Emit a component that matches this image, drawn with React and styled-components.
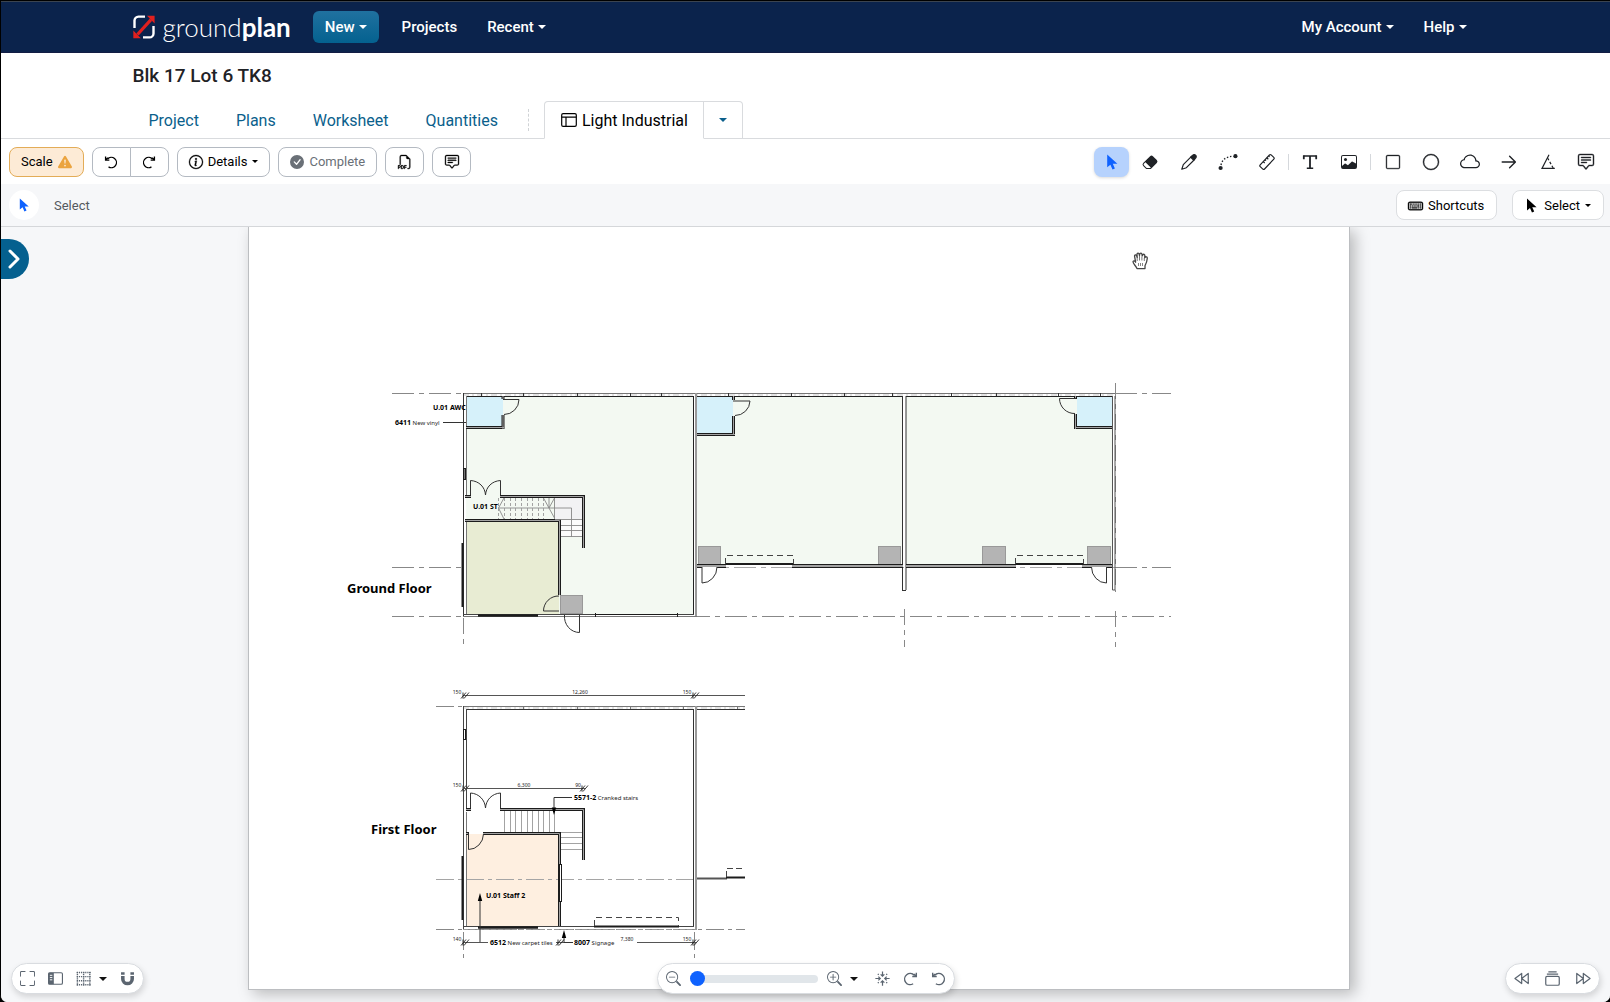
import React, { useState } from "react";
import styled, { createGlobalStyle, css } from "styled-components";
import {
  BsChatSquareText,
  BsCheckCircleFill,
  BsCircle,
  BsCloud,
  BsEraserFill,
  BsExclamationTriangleFill,
  BsFiletypePdf,
  BsFullscreen,
  BsImage,
  BsInfoCircle,
  BsKeyboard,
  BsSquare,
  BsZoomIn,
  BsZoomOut,
} from "react-icons/bs";

/* ---------- icons ---------- */

const PointerIcon = () => (
  <svg className="icon" viewBox="0 0 16 16" fill="currentColor" aria-hidden="true">
    <path d="M3.2.6v12.6l3.2-2.5 2.1 4.7 2.4-1-2.1-4.6h4.6z" />
  </svg>
);

const UndoIcon = () => (
  <svg className="icon" viewBox="0 0 16 16" fill="none" stroke="currentColor" strokeWidth="1.5" aria-hidden="true">
    <path d="M4 4.6A5.9 5.9 0 1 1 5.2 13.6" />
    <path d="M1.8 1.8v4h4.3M1.8 5.8l2.6-2.6" />
  </svg>
);

const RedoIcon = () => (
  <svg className="icon" viewBox="0 0 16 16" fill="none" stroke="currentColor" strokeWidth="1.5" aria-hidden="true">
    <path d="M12 4.6A5.9 5.9 0 1 0 10.8 13.6" />
    <path d="M14.2 1.8v4H9.9M14.2 5.8l-2.6-2.6" />
  </svg>
);

const LayoutIcon = () => (
  <svg className="icon" viewBox="0 0 16 16" fill="none" stroke="currentColor" strokeWidth="1.2" aria-hidden="true">
    <rect x="0.7" y="1.6" width="14.6" height="12.8" rx="1.4" />
    <path d="M.7 5.2h14.6M5 5.2v9.2" />
  </svg>
);

const PencilIcon = () => (
  <svg className="icon" viewBox="0 0 16 16" fill="none" stroke="currentColor" strokeWidth="1.2" aria-hidden="true">
    <path d="M.8 15.2l1.5-4.6 8.2-8.2 3.1 3.1-8.2 8.2z" strokeLinejoin="round" />
    <path d="M9.7 3.2l2-2a2 2 0 0 1 2.9 0 2 2 0 0 1 0 2.9l-2 2z" fill="currentColor" />
  </svg>
);

const PathIcon = () => (
  <svg className="icon" viewBox="0 0 20 18" fill="currentColor" aria-hidden="true">
    <circle cx="2.6" cy="15" r="2.1" />
    <circle cx="17.4" cy="3.2" r="2.1" />
    <path
      d="M3 12C4.2 6.6 8 3.6 15 3.3"
      fill="none"
      stroke="currentColor"
      strokeWidth="1.4"
      strokeDasharray="1.4 1.9"
    />
  </svg>
);

const RulerIcon = () => (
  <svg className="icon" viewBox="0 0 16 16" fill="none" stroke="currentColor" strokeWidth="1.2" aria-hidden="true">
    <rect x="-8" y="-3" width="16" height="6" rx="1.2" transform="translate(8 8) rotate(-47)" />
    <path d="M4.2 7.6l1.5 1.4M6 5.7l1 .9M7.8 3.8l1.5 1.4M9.7 2.1l.9.8" />
  </svg>
);

const TypeIcon = () => (
  <svg className="icon" viewBox="0 0 16 16" fill="none" stroke="currentColor" aria-hidden="true">
    <path d="M1.2 2h13.6M4.8 14.3h6.4" strokeWidth="1.6" />
    <path d="M8 2v12M1.8 1.4v3.8M14.2 1.4v3.8" strokeWidth="1.8" />
  </svg>
);

const ArrowIcon = () => (
  <svg className="icon" viewBox="0 0 16 16" fill="none" stroke="currentColor" strokeWidth="1.4" aria-hidden="true">
    <path d="M1.2 8h13M8.6 2.2L14.4 8l-5.8 5.8" strokeLinecap="round" strokeLinejoin="round" />
  </svg>
);

const AngleIcon = () => (
  <svg className="icon" viewBox="0 0 16 16" fill="none" stroke="currentColor" strokeWidth="1.2" aria-hidden="true">
    <path d="M9 .8L2 14.4h12.8" />
    <path d="M7.6 4l5.6 10" strokeDasharray="2.6 1.8" />
  </svg>
);

const SidePanelIcon = () => (
  <svg className="icon" viewBox="0 0 16 16" aria-hidden="true">
    <rect x=".6" y="1.9" width="14.8" height="12.2" rx="1.4" fill="none" stroke="currentColor" strokeWidth="1.2" />
    <rect x=".6" y="1.9" width="5.6" height="12.2" fill="currentColor" />
    <path d="M2 4.6h2.6M2 7h2.6M2 9.4h2.6" stroke="#fff" strokeWidth="1" />
  </svg>
);

const GridIcon = () => (
  <svg
    className="icon"
    viewBox="0 0 15 15"
    fill="none"
    stroke="currentColor"
    strokeWidth="1.4"
    strokeDasharray="1.2 .9"
    aria-hidden="true"
  >
    <path d="M.8 1.5h13.8M.8 5.600h13.8M.8 9.700h13.8M.8 13.800h13.8" />
    <path d="M1.400 1v13.500M7.600 1v13.500M13.800 1v13.500" />
  </svg>
);

const MagnetIcon = () => (
  <svg className="icon" viewBox="0 0 16 16" fill="none" stroke="currentColor" strokeWidth="3.8" aria-hidden="true">
    <path d="M3 5.4v3a5 5 0 0 0 10 0v-3M3 1.4v2.6M13 1.4v2.6" />
  </svg>
);

const CollapseIcon = () => (
  <svg className="icon" viewBox="0 0 16 16" fill="none" stroke="currentColor" strokeWidth="1.3" aria-hidden="true">
    <path d="M8 .4v5M6 3.6l2 2 2-2M8 15.6v-5M6 12.4l2-2 2 2M.4 8h5M3.6 6l2 2-2 2M15.6 8h-5M12.4 6l-2 2 2 2" />
    <path d="M3 3l1 1M13 3l-1 1M3 13l1-1M13 13l-1-1" />
  </svg>
);

const RewindIcon = () => (
  <svg className="icon" viewBox="0 0 16 16" fill="none" stroke="currentColor" strokeWidth="1.3" aria-hidden="true">
    <path d="M8.2 2.6v10.8L1 8zM15.2 2.6v10.8L8.2 8z" strokeLinejoin="round" />
  </svg>
);

const ForwardIcon = () => (
  <svg className="icon" viewBox="0 0 16 16" fill="none" stroke="currentColor" strokeWidth="1.3" aria-hidden="true">
    <path d="M7.8 2.6v10.8L15 8zM.8 2.6v10.8L7.8 8z" strokeLinejoin="round" />
  </svg>
);

const StackIcon = () => (
  <svg className="icon" viewBox="0 0 16 16" fill="none" stroke="currentColor" strokeWidth="1.3" aria-hidden="true">
    <rect x=".8" y="5.8" width="14.4" height="9.4" rx="1.4" />
    <path d="M2 3.4h12M3.6 1h8.8" />
  </svg>
);

const LogoMark = () => (
  <svg viewBox="0 0 22 24" width="22" height="24" fill="none" aria-hidden="true">
    <path d="M1.5 13V5.6a4 4 0 0 1 4-4H12" stroke="#fff" strokeWidth="2.4" />
    <path d="M20.5 11v7.4a4 4 0 0 1-4 4H10" stroke="#fff" strokeWidth="2.4" />
    <path d="M4.5 19.5L18 4.6" stroke="#e0201f" strokeWidth="3.2" />
    <path d="M14 .8h7.6v7.6zM.3 15.6v7.6h7.6z" fill="#e0201f" />
  </svg>
);

const HandIcon = () => (
  <svg viewBox="0 0 17 18" width="17" height="18" aria-hidden="true">
    <path
      d="M5 16.5C4 14 1 11.6 1 9.8c0-1.2 1.7-1.2 2.6.4L2.6 4.4c-.3-1.7 1.7-2 2.1-.4l.5 1.4-.2-3c0-1.6 1.9-1.8 2.2-.1l.3 1.2.2-1.3c.3-1.5 2.1-1.4 2.3.1l.2 1.5.6-1c.8-1 2.1-.5 2 .8l-.1 2.2c.8-1.7 2.7-1.2 2.6.4-.2 3.2-1.3 5.6-2.3 7.6v2.8z"
      fill="#fff"
      stroke="#444"
      strokeWidth="1.3"
      strokeLinejoin="round"
    />
    <path d="M5.2 5v4M7.5 4v4.5M9.9 4.5v4M12.3 6v3" stroke="#555" strokeWidth=".8" />
    <path d="M6.5 11v3M8.5 11v3M10.5 11v3" stroke="#666" strokeWidth=".8" />
  </svg>
);

/* ---------- plan drawing ---------- */

const BigLabel = ({ x, y, children }) => (
  <text x={x} y={y} fontSize="13" fontWeight="700">
    {children}
  </text>
);

const Note = ({ x, y, code, children }) => (
  <text x={x} y={y} fontSize="7">
    <tspan fontWeight="700">{code}</tspan>
    {children && (
      <tspan fill="#222" fontSize="6">
        {" "}
        {children}
      </tspan>
    )}
  </text>
);

const Dim = ({ x, y, children }) => (
  <text x={x} y={y} fontSize="5" fill="#222" textAnchor="middle">
    {children}
  </text>
);

const Tick = ({ x, y }) => (
  <path d={`M${x - 2} ${y + 3}l5-6M${x + 1} ${y + 3}l5-6M${x} ${y - 3}v6`} stroke="#222" strokeWidth=".9" />
);

// double line wall with a grey core
const Wall = ({ d, core = "#a3a3a3", w = 3 }) => (
  <>
    <path d={d} stroke="#1c1c1c" strokeWidth={w} />
    <path d={d} stroke={core} strokeWidth={w - 2} />
  </>
);

function GroundFloor() {
  return (
    <g fill="none">
      <rect x="466" y="396" width="228" height="218" fill="#f3f9f2" />
      <rect x="697" y="396" width="206" height="169" fill="#f3f9f2" />
      <rect x="906" y="396" width="207" height="169" fill="#f3f9f2" />
      <rect x="466" y="397" width="37" height="30" fill="#d6f1fa" />
      <rect x="697" y="397" width="36" height="36" fill="#d6f1fa" />
      <rect x="1077" y="397" width="36" height="30" fill="#d6f1fa" />
      <rect x="466" y="521" width="93" height="93" fill="#e8ecd3" />
      <rect x="555" y="498" width="27" height="21" fill="#f2f2f4" />
      <rect x="561" y="519" width="21" height="18" fill="#fbfbfb" />

      <g stroke="#888" strokeWidth="1" strokeDasharray="22 5 5 5">
        <path d="M392 393.5H463M392 567.5H463M392 616.5H1171M1115 393.5H1171M1115 567.5H1171" />
        <path d="M697 567.5H1115" stroke="#aaa" />
      </g>
      <g stroke="#888" strokeWidth="1" strokeDasharray="16 5 5 5">
        <path d="M463.5 618V647M904.5 609V647M1115.5 383V592M1115.5 611V647" />
      </g>

      <path d="M463 393.5H1115" stroke="#777" />
      <path d="M463 395H1115" stroke="#bbb" strokeDasharray="6 3 2 3" strokeWidth=".8" />
      <path d="M466 396.5H693M697 396.5H903M906 396.5H1112" stroke="#222" />
      <path
        d="M481.5 393v3M523.5 393v3M577.5 393v3M630.5 393v3M661.5 393v3M728.5 393v3M791.5 393v3M844.5 393v3M892.5 393v3M951.5 393v3M996.5 393v3M1058.5 393v3M1100.5 393v3"
        stroke="#333"
      />
      <path d="M463.5 393V616" stroke="#333" />
      <path d="M466.5 396V497" stroke="#777" />
      <path d="M466.5 521V614" stroke="#777" />
      <path d="M693.5 396V614" stroke="#222" />
      <path d="M696 393V616" stroke="#999" strokeWidth="2" />
      <path d="M902.5 396V590M906 590V396M902 590.5H906" stroke="#333" />
      <path d="M1112.5 396V590H1115V396" stroke="#555" />
      <path d="M463 614.5H694" stroke="#444" />
      <path d="M463 616.5H697" stroke="#777" />
      <path d="M462.5 543V607" stroke="#1c1c1c" strokeWidth="2" />
      <rect x="463.5" y="468.5" width="2" height="11" stroke="#1c1c1c" fill="#777" />

      <Wall d="M466 427.5H504M503 415V429M503 396v3" />
      <path d="M503 399.5H519A15 15 0 0 1 504 414.5" stroke="#333" />
      <Wall d="M697 434.5H735M733.5 416V435M733.5 396v4" />
      <path d="M733 401H750A15 15 0 0 1 735 415.5" stroke="#333" />
      <Wall d="M1075 427.5H1112M1075.5 414V429M1075.5 396v3" />
      <path d="M1076 398.5H1059.5A15 15 0 0 0 1075 413.5" stroke="#333" />

      <path d="M470.5 497V480.5C479 481 485 487 485.5 495C486 487 492 481 500.5 480.5V497" stroke="#333" />
      <Wall d="M465 496.5H471M500 496.5H583.5V548" />
      <Wall d="M465 520.5H559.5V595" />
      <path
        d="M498.5 508H571.5V537M498.5 508L504 498M498.5 508L504 519M543.5 498L554.5 518M549 498V508L554.5 498M554.5 498V519M555 519.5H582M561 525.5H582M561 530.5H582M561 536.5H582"
        stroke="#888"
        strokeWidth=".9"
      />
      <path
        d="M498.5 498V519M504.5 498V519M510.5 498V519M515.5 498V519M521.5 498V519M527.5 498V519M532.5 498V519M538.5 498V519M543.5 498V519"
        stroke="#999"
        strokeDasharray="3 2"
        strokeWidth=".9"
      />

      <g fill="#b4b4b4" stroke="#999">
        <rect x="560.5" y="595.5" width="22" height="18" />
        <rect x="698.5" y="546.5" width="22" height="18" />
        <rect x="878.5" y="546.5" width="22" height="18" />
        <rect x="982.5" y="546.5" width="23" height="18" />
        <rect x="1087.5" y="546.5" width="23" height="18" />
      </g>
      <path d="M559 611H543.5A15 15 0 0 1 559 596" stroke="#333" />
      <path d="M579.5 615V632.5A15 16 0 0 1 564.5 615" stroke="#333" />
      <path d="M478 615.5H538" stroke="#1c1c1c" strokeWidth="2.5" />
      <path d="M595 614.5H678M595.5 613v4M677.5 613v4" stroke="#1c1c1c" />

      <Wall d="M697 566H726M792 566H903M906 566H1016M1082 566H1112" w={4} />
      <path d="M726 564H793M1016 564H1083" stroke="#1c1c1c" strokeWidth="2" />
      <path d="M702 567V583A15 16 0 0 0 717 567M1106.5 567V583A15 16 0 0 1 1091.5 567" stroke="#333" fill="#fff" />
      <path d="M725.5 564V555.5H793.5V564M1015.5 564V555.5H1083.5V564" stroke="#444" strokeDasharray="6 4" />

      <path d="M443 422.5H466" stroke="#333" />
    </g>
  );
}

function FirstFloor() {
  return (
    <g fill="none">
      <rect x="466" y="834" width="93" height="92" fill="#feefe0" />
      <g stroke="#888" strokeWidth="1" strokeDasharray="18 4 4 4">
        <path d="M436 706.5H463M436 929.5H745M463.5 932V959M694.5 932V959" />
        <path d="M436 879.5H693" stroke="#a5a5a5" />
      </g>
      <path d="M463 695.5H745M463 788.5H585M463 942.5H488M556 942.5H573M637 942.5H696" stroke="#555" />
      <Tick x={463} y={695.5} />
      <Tick x={693} y={695.5} />
      <Tick x={463} y={788.5} />
      <Tick x={582} y={788.5} />
      <Tick x={463} y={942.5} />
      <Tick x={558} y={942.5} />
      <Tick x={693} y={942.5} />

      <path d="M463 706.5H745" stroke="#777" />
      <path d="M463 708H745" stroke="#bbb" strokeDasharray="6 3 2 3" strokeWidth=".8" />
      <path d="M466 709.5H693M697 709.5H745" stroke="#333" />
      <path d="M523.5 706v3M577.5 706v3M630.5 706v3M683.5 706v3M737.5 706v3" stroke="#777" />
      <path d="M463.5 706V929M466.5 709V808" stroke="#444" />
      <path d="M466.5 812V926" stroke="#777" />
      <path d="M693.5 709V926" stroke="#333" />
      <path d="M696 706V929" stroke="#999" strokeWidth="2" />
      <path d="M463 926.5H694" stroke="#444" />
      <path d="M463 929.5H697" stroke="#999" strokeDasharray="5 2" />
      <path d="M462.5 856V920" stroke="#1c1c1c" strokeWidth="2" />
      <rect x="463.5" y="729.5" width="2" height="10" stroke="#1c1c1c" fill="#fff" />

      <path d="M470.5 809V793C479 793.5 485 800 485.5 808C486 800 492 793.5 500.5 793V809" stroke="#333" />
      <Wall d="M466 809.5H471M500 809.5H583.5V860" />
      <Wall d="M483 833.5H559.5V926M466 833.5H469" />
      <rect x="559.5" y="864.5" width="2" height="37" fill="#fff" stroke="#1c1c1c" />
      <path
        d="M504.5 811V832M510.5 811V832M515.5 811V832M521.5 811V832M527.5 811V832M532.5 811V832M538.5 811V832M543.5 811V832M549.5 811V832M554.5 811V832M561 832.5H582M561 837.5H582M561 843.5H582M561 849.5H582"
        stroke="#999"
        strokeWidth=".9"
      />
      <path d="M468.5 833V849.5A15 16 0 0 0 483.5 834" stroke="#333" />

      <path d="M478 927.5H538" stroke="#1c1c1c" strokeWidth="2.5" />
      <path d="M594 926.5H679" stroke="#1c1c1c" strokeWidth="2" />
      <path d="M594.5 926V917.5H678.5V926" stroke="#444" strokeDasharray="6 4" />
      <path d="M697 878.5H727" stroke="#555" strokeWidth="2" />
      <path d="M726 877.5H745" stroke="#1c1c1c" strokeWidth="2" />
      <path d="M726.5 877V868.5H742" stroke="#444" strokeDasharray="6 3" />

      <path d="M572 797.5H554V808M480 942V899M573 942.5H564V938" stroke="#333" />
      <path d="M551.8 807.5h4.4l-2.2 7.5zM477.8 901h4.4l-2.2-8zM561.8 938h4.4l-2.2-8z" fill="#000" />
    </g>
  );
}

function Plan() {
  return (
    <PlanSvg viewBox="249 227 1100 762" role="img" aria-label="Ground and first floor plan">
      <GroundFloor />
      <FirstFloor />
      <g fill="#000">
        <BigLabel x={347} y={593}>Ground Floor</BigLabel>
        <BigLabel x={371} y={834}>First Floor</BigLabel>
        <Note x={433} y={410} code="U.01 AWC" />
        <Note x={395} y={425} code="6411">New vinyl</Note>
        <Note x={473} y={509} code="U.01 ST" />
        <Note x={574} y={800} code="5571-2">Cranked stairs</Note>
        <Note x={486} y={898} code="U.01 Staff 2" />
        <Note x={490} y={945} code="6512">New carpet tiles</Note>
        <Note x={574} y={945} code="8007">Signage</Note>
        <Dim x={457} y={694}>150</Dim>
        <Dim x={580} y={694}>12,260</Dim>
        <Dim x={687} y={694}>150</Dim>
        <Dim x={457} y={787}>150</Dim>
        <Dim x={524} y={787}>6,300</Dim>
        <Dim x={578} y={787}>90</Dim>
        <Dim x={457} y={941}>140</Dim>
        <Dim x={627} y={941}>7,380</Dim>
        <Dim x={687} y={941}>150</Dim>
      </g>
    </PlanSvg>
  );
}

/* ---------- page ---------- */

const TABS = ["Project", "Plans", "Worksheet", "Quantities"];

const TOOLS = [
  { name: "Select", icon: <PointerIcon /> },
  { name: "Eraser", icon: <BsEraserFill className="icon" /> },
  { name: "Pencil", icon: <PencilIcon /> },
  { name: "Path", icon: <PathIcon />, wide: true },
  { name: "Measure", icon: <RulerIcon /> },
  null,
  { name: "Text", icon: <TypeIcon /> },
  { name: "Image", icon: <BsImage className="icon" /> },
  null,
  { name: "Rectangle", icon: <BsSquare className="icon heavy" />, small: true },
  { name: "Ellipse", icon: <BsCircle className="icon heavy" /> },
  { name: "Cloud", icon: <BsCloud className="icon" />, wide: true },
  { name: "Arrow", icon: <ArrowIcon /> },
  { name: "Angle", icon: <AngleIcon /> },
  { name: "Comment", icon: <BsChatSquareText className="icon heavy" /> },
];

export default function App() {
  const [tool, setTool] = useState("Select");
  const [zoom, setZoom] = useState(0);

  return (
    <Shell>
      <GlobalStyle />
      <Navbar>
        <NavInner>
          <Brand href="#">
            <LogoMark />
            <BrandName>
              ground<b>plan</b>
            </BrandName>
          </Brand>
          <NewButton type="button">
            New
            <Caret />
          </NewButton>
          <NavLink href="#">Projects</NavLink>
          <NavButton type="button">
            Recent
            <Caret />
          </NavButton>
          <Spacer />
          <NavButton type="button">
            My Account
            <Caret />
          </NavButton>
          <NavButton type="button">
            Help
            <Caret />
          </NavButton>
        </NavInner>
      </Navbar>

      <Header>
        <HeaderInner>
          <Title>Blk 17 Lot 6 TK8</Title>
          <Tabs>
            {TABS.map((t) => (
              <Tab key={t} href="#">
                {t}
              </Tab>
            ))}
            <TabDivider />
            <ActiveTab href="#" aria-current="page">
              <LayoutIcon />
              Light Industrial
            </ActiveTab>
            <TabMenu type="button" aria-label="Choose plan">
              <Caret />
            </TabMenu>
          </Tabs>
        </HeaderInner>
      </Header>

      <Toolbar>
        <ScaleButton type="button">
          Scale
          <BsExclamationTriangleFill className="icon" />
        </ScaleButton>
        <ButtonGroup>
          <IconButton type="button" aria-label="Undo">
            <UndoIcon />
          </IconButton>
          <IconButton type="button" aria-label="Redo">
            <RedoIcon />
          </IconButton>
        </ButtonGroup>
        <Button type="button">
          <BsInfoCircle className="icon heavy" />
          Details
          <Caret $small />
        </Button>
        <Button type="button" $muted>
          <BsCheckCircleFill className="icon" />
          Complete
        </Button>
        <IconButton type="button" aria-label="Export PDF">
          <BsFiletypePdf className="icon heavy" />
        </IconButton>
        <IconButton type="button" aria-label="Comments">
          <BsChatSquareText className="icon heavy" />
        </IconButton>
        <Spacer />
        <Tools>
          {TOOLS.map((t, i) =>
            t ? (
              <Tool
                key={t.name}
                type="button"
                aria-label={t.name}
                $active={t.name === tool}
                $wide={t.wide}
                $small={t.small}
                onClick={() => setTool(t.name)}
              >
                {t.icon}
              </Tool>
            ) : (
              <ToolDivider key={i} />
            )
          )}
        </Tools>
      </Toolbar>

      <SubBar>
        <ToolBadge>
          <PointerIcon />
        </ToolBadge>
        <ToolName>{tool}</ToolName>
        <Spacer />
        <PlainButton type="button">
          <BsKeyboard className="icon heavy" />
          Shortcuts
        </PlainButton>
        <PlainButton type="button">
          <PointerIcon />
          Select
          <Caret $small />
        </PlainButton>
      </SubBar>

      <Canvas>
        <Sheet>
          <Plan />
        </Sheet>
        <Cursor>
          <HandIcon />
        </Cursor>
        <DrawerToggle type="button" aria-label="Open panel">
          <svg viewBox="0 0 12 20" width="12" height="20" fill="none" stroke="#fff" strokeWidth="3" aria-hidden="true">
            <path d="M2 2l8 8-8 8" strokeLinecap="round" strokeLinejoin="round" />
          </svg>
        </DrawerToggle>

        <LeftPill>
          <PillButton type="button" aria-label="Full screen">
            <BsFullscreen className="icon" />
          </PillButton>
          <PillButton type="button" aria-label="Side panel">
            <SidePanelIcon />
          </PillButton>
          <PillButton type="button" aria-label="Grid" $menu>
            <GridIcon />
            <Caret />
          </PillButton>
          <PillButton type="button" aria-label="Snap">
            <MagnetIcon />
          </PillButton>
        </LeftPill>

        <ZoomPill>
          <ZoomGroup>
            <PillButton type="button" aria-label="Zoom out">
              <BsZoomOut className="icon" />
            </PillButton>
            <Slider
              type="range"
              aria-label="Zoom"
              min="0"
              max="100"
              value={zoom}
              onChange={(e) => setZoom(Number(e.target.value))}
            />
            <PillButton type="button" aria-label="Zoom in" $menu>
              <BsZoomIn className="icon" />
              <Caret />
            </PillButton>
          </ZoomGroup>
          <PillButton type="button" aria-label="Fit to screen">
            <CollapseIcon />
          </PillButton>
          <PillButton type="button" aria-label="Rotate right">
            <RedoIcon />
          </PillButton>
          <PillButton type="button" aria-label="Rotate left">
            <UndoIcon />
          </PillButton>
        </ZoomPill>

        <RightPill>
          <PillButton type="button" aria-label="Previous plan">
            <RewindIcon />
          </PillButton>
          <PillButton type="button" aria-label="All plans">
            <StackIcon />
          </PillButton>
          <PillButton type="button" aria-label="Next plan">
            <ForwardIcon />
          </PillButton>
        </RightPill>
      </Canvas>
    </Shell>
  );
}

const GlobalStyle = createGlobalStyle`
  *, *::before, *::after {
    box-sizing: border-box;
  }

  body {
    margin: 0;
    background: #000;
    font-family: Roboto, "Liberation Sans", sans-serif;
    font-size: 13px;
    color: #1f2226;
  }

  button {
    font: inherit;
    color: inherit;
    cursor: pointer;
  }

  a {
    text-decoration: none;
  }

  .icon {
    flex: none;
    width: 14px;
    height: 14px;
    overflow: visible;
  }

  .heavy path {
    stroke: currentColor;
    stroke-width: 0.4;
  }
`;

const Shell = styled.div`
  display: flex;
  flex-direction: column;
  min-height: 100vh;
  border-top: 1px solid #000;
  border-left: 1px solid #000;
  border-radius: 0 0 7px 7px;
  overflow: hidden;
  background: #fff;
`;

const Navbar = styled.nav`
  background: #0b234c;
  border-top: 1px solid #3b4450;
  border-bottom: 1px solid #121d44;
`;

const NavInner = styled.div`
  display: flex;
  align-items: center;
  max-width: 1346px;
  height: 50px;
  margin: 0 auto;
`;

const Brand = styled.a`
  display: flex;
  align-items: center;
  gap: 8px;
  margin-right: 22px;
  color: #fff;
`;

const BrandName = styled.span`
  font-family: Lato, sans-serif;
  font-size: 26px;
  font-weight: 300;
  line-height: 32px;

  b {
    font-weight: 700;
  }
`;

const Caret = styled.span`
  width: 0;
  height: 0;
  border: solid transparent;
  border-width: ${(props) => (props.$small ? "3px 3px 0" : "4px 4px 0")};
  border-top-color: currentColor;
`;

const navItem = css`
  display: flex;
  align-items: center;
  gap: 4px;
  height: 32px;
  padding: 0 12px;
  border: 0;
  border-radius: 6px;
  background: none;
  color: #fff;
  font-size: 15px;
  font-weight: 500;
`;

const NavLink = styled.a`
  ${navItem}
  margin-left: 11px;
`;

const NavButton = styled.button`
  ${navItem}
  margin-left: 6px;
`;

const NewButton = styled.button`
  ${navItem}
  background: linear-gradient(#20719f, #04618f);
`;

const Spacer = styled.div`
  flex: 1;
`;

const Header = styled.header`
  border-bottom: 1px solid #d9dbde;
`;

const HeaderInner = styled.div`
  max-width: 1346px;
  margin: 0 auto;
  padding-top: 10px;
`;

const Title = styled.h1`
  margin: 0 0 12px;
  font-size: 19px;
  font-weight: 500;
  line-height: 26px;
`;

const Tabs = styled.div`
  display: flex;
  align-items: center;
  height: 38px;
  margin-bottom: -1px;
  font-size: 16px;
`;

const Tab = styled.a`
  margin-right: 5px;
  padding: 0 16px;
  color: #0b5f8c;
`;

const TabDivider = styled.span`
  height: 22px;
  margin: 0 15px 0 9px;
  border-left: 1px dashed #d0d3d6;
`;

const ActiveTab = styled.a`
  display: flex;
  align-items: center;
  gap: 5px;
  height: 38px;
  padding: 0 15px 0 16px;
  border: 1px solid #d9dbde;
  border-bottom-color: #fff;
  border-radius: 4px 0 0 0;
  background: #fff;
  color: #000;

  .icon {
    width: 16px;
    height: 16px;
  }
`;

const TabMenu = styled.button`
  display: flex;
  align-items: center;
  justify-content: center;
  width: 39px;
  height: 38px;
  border: 1px solid #d9dbde;
  border-left: 0;
  border-radius: 0 4px 0 0;
  background: #fff;
  color: #0b5f8c;
`;

const Toolbar = styled.div`
  display: flex;
  align-items: center;
  gap: 8px;
  height: 45px;
  padding: 0 6px 0 8px;
`;

const Button = styled.button`
  display: flex;
  align-items: center;
  justify-content: center;
  gap: 5px;
  height: 30px;
  padding: 0 11px;
  border: 1px solid #b4bac2;
  border-radius: 8px;
  background: #fff;
  color: ${(props) => (props.$muted ? "#6a7077" : "#000")};
  font-size: 13px;
`;

const ScaleButton = styled(Button)`
  border-color: #e3ac57;
  background: #fdebd6;

  .icon {
    color: #eba43f;
  }
`;

const IconButton = styled(Button)`
  width: 39px;
  padding: 0;
`;

const ButtonGroup = styled.div`
  display: flex;

  ${IconButton}:first-child {
    border-radius: 8px 0 0 8px;
  }

  ${IconButton}:last-child {
    margin-left: -1px;
    border-radius: 0 8px 8px 0;
  }
`;

const Tools = styled.div`
  display: flex;
  align-items: center;
  justify-content: space-between;
  width: 510px;
`;

const toolIconSize = (props) => (props.$wide ? "20px" : props.$small ? "14px" : "16px");

const Tool = styled.button`
  display: flex;
  align-items: center;
  justify-content: center;
  width: 35px;
  height: 30px;
  padding: 0;
  border: 0;
  border-radius: 8px;
  background: ${(props) => (props.$active ? "#b6d2fd" : "none")};
  box-shadow: ${(props) => (props.$active ? "0 1px 3px rgba(0, 0, 0, 0.15)" : "none")};
  color: ${(props) => (props.$active ? "#0f62fe" : "#1f2226")};

  .icon {
    width: ${toolIconSize};
    height: ${toolIconSize};
  }
`;

const ToolDivider = styled.span`
  width: 1px;
  height: 16px;
  background: #d5d8dc;
`;

const SubBar = styled.div`
  display: flex;
  align-items: center;
  gap: 15px;
  height: 43px;
  padding: 0 6px 0 8px;
  border-bottom: 1px solid #d5d7da;
  background: #f6f7f9;
`;

const ToolBadge = styled.span`
  display: flex;
  align-items: center;
  justify-content: center;
  width: 30px;
  height: 30px;
  border-radius: 50%;
  background: #fff;
  color: #0f62fe;
`;

const ToolName = styled.span`
  font-size: 13px;
  color: #55595e;
`;

const PlainButton = styled(Button)`
  padding: 0 12px 0 11px;
  border-color: #dcdee1;

  .icon {
    width: 15px;
    height: 15px;
  }
`;

const Canvas = styled.main`
  position: relative;
  display: flex;
  flex: 1;
  padding: 0 260px 12px 247px;
  background: #f6f7f9;
  overflow: hidden;
`;

const Sheet = styled.div`
  flex: 1;
  border: solid #bcbec1;
  border-width: 0 1px 1px;
  background: #fff;
  box-shadow: 5px 4px 14px rgba(0, 0, 0, 0.25);
`;

const PlanSvg = styled.svg`
  display: block;
  width: 100%;
  font-family: "Noto Sans", "Open Sans", sans-serif;
`;

const Cursor = styled.span`
  position: absolute;
  top: 25px;
  left: 1131px;
  line-height: 0;
`;

const DrawerToggle = styled.button`
  position: absolute;
  top: 12px;
  left: 0;
  display: flex;
  align-items: center;
  width: 28px;
  height: 40px;
  padding: 0 0 0 7px;
  border: 0;
  border-radius: 0 20px 20px 0;
  background: #05608f;
`;

const Pill = styled.div`
  position: absolute;
  bottom: 8px;
  display: flex;
  align-items: center;
  height: 31px;
  padding: 0 8px;
  border: 1px solid #d9dce0;
  border-radius: 16px;
  background: #fff;
  box-shadow: 1px 3px 6px rgba(0, 0, 0, 0.14);
`;

const LeftPill = styled(Pill)`
  left: 10px;
  gap: 13px;
`;

const ZoomPill = styled(Pill)`
  left: 50%;
  gap: 13px;
  transform: translateX(-50%);
`;

const ZoomGroup = styled.div`
  display: flex;
  align-items: center;
  gap: 9px;
  margin-right: 4px;
`;

const RightPill = styled(Pill)`
  right: 10px;
  gap: 16px;
`;

const PillButton = styled.button`
  display: flex;
  align-items: center;
  gap: ${(props) => (props.$menu ? "8px" : "0")};
  padding: 0;
  border: 0;
  background: none;
  color: #5b6570;

  .icon {
    width: 15px;
    height: 15px;
  }

  ${Caret} {
    color: #111;
  }
`;

const Slider = styled.input`
  width: 128px;
  height: 15px;
  margin: 0;
  appearance: none;
  background: none;

  &::-webkit-slider-runnable-track {
    height: 8px;
    border-radius: 4px;
    background: #e1e6ea;
  }

  &::-webkit-slider-thumb {
    appearance: none;
    width: 15px;
    height: 15px;
    margin-top: -4px;
    border-radius: 50%;
    background: #0f62fe;
  }
`;
